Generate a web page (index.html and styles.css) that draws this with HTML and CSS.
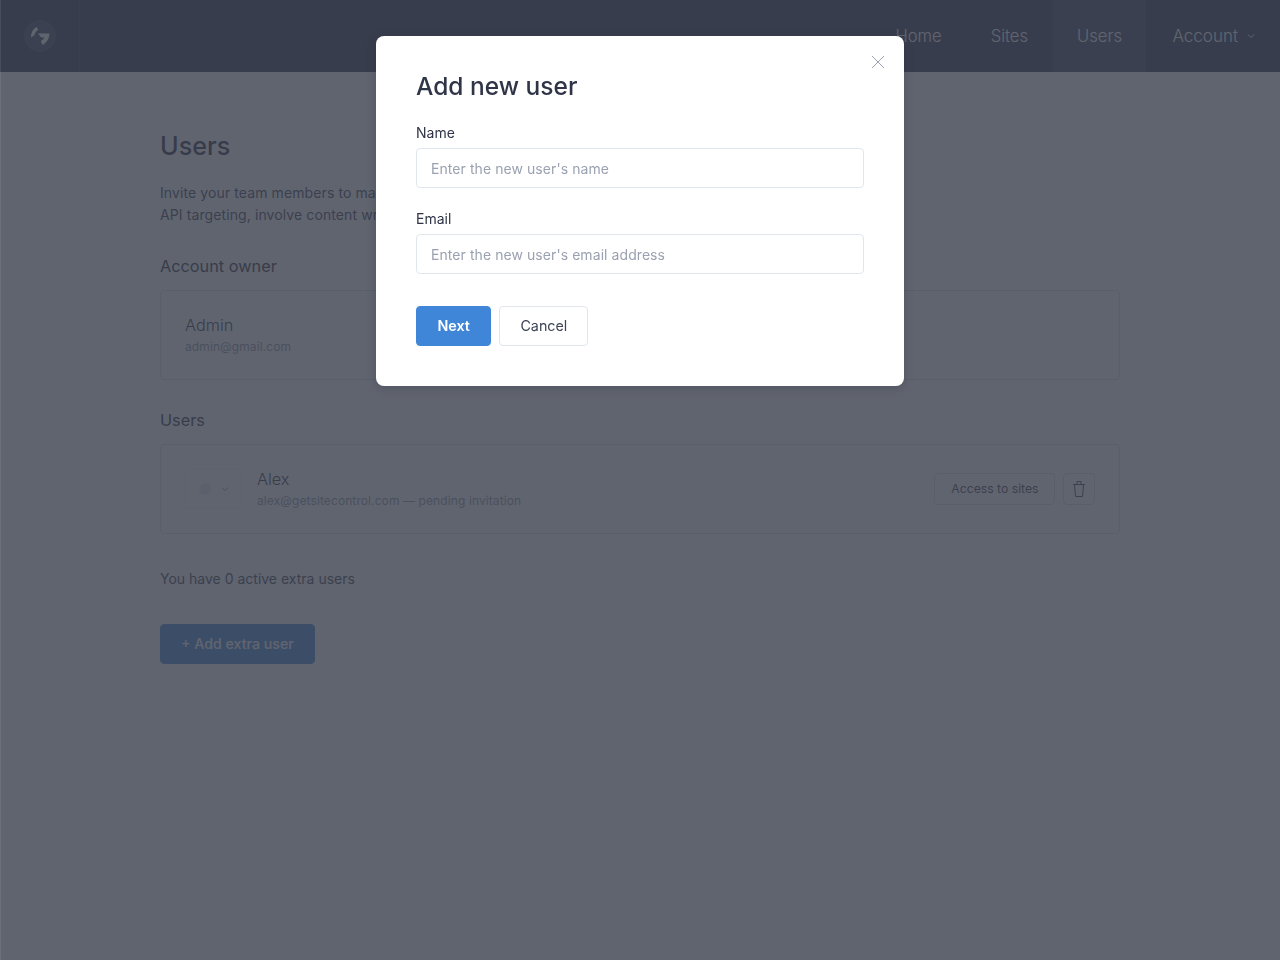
FILE: index.html
```html
<!DOCTYPE html>
<html lang="en">

<head>
    <meta charset="UTF-8">
    <meta name="viewport" content="width=device-width, initial-scale=1.0">
    <title>Users</title>
    <link rel="stylesheet" href="styles.css">
</head>

<body>
    <header class="topbar">
        <a class="logoCell" href="#">
            <svg class="logo" width="32" height="32" viewBox="0 0 32 32">
                <circle cx="16" cy="16" r="16" fill="#3d4661"></circle>
                <path d="M7 17.5 C6.8 13.4 8.6 9.4 12.4 7 L14.4 9.6 C12.4 11 11 13 10.4 15.2 Z" fill="#fff"></path>
                <path d="M14 13.6 H25.4 C25.4 18.4 23 22.6 18.6 25 L16.8 21 C18.6 20 19.8 19 20.4 17.4 H17.2 Z" fill="#fff"></path>
            </svg>
        </a>
        <nav class="topnav">
            <a href="#">Home</a>
            <a href="#">Sites</a>
            <a class="active" href="#">Users</a>
            <a class="account" href="#">Account
                <svg width="8" height="6" viewBox="0 0 8 6"><path d="M1 1.5 L4 4.5 L7 1.5" fill="none" stroke="#fff" stroke-width="1"></path></svg>
            </a>
        </nav>
    </header>

    <main class="content">
        <h1>Users</h1>
        <p class="intro">Invite your team members to manage<br>API targeting, involve content writers</p>

        <h2>Account owner</h2>
        <div class="card">
            <div class="person">
                <div class="name">Admin</div>
                <div class="mail">admin@gmail.com</div>
            </div>
        </div>

        <h2>Users</h2>
        <div class="card">
            <div class="roleSelect">
                <span class="dot"></span>
                <svg width="8" height="6" viewBox="0 0 8 6"><path d="M1 1.5 L4 4.5 L7 1.5" fill="none" stroke="#8d94a6" stroke-width="1"></path></svg>
            </div>
            <div class="person">
                <div class="name">Alex</div>
                <div class="mail">alex@getsitecontrol.com — pending invitation</div>
            </div>
            <a class="smallBtn" href="#">Access to sites</a>
            <a class="iconBtn" href="#">
                <svg width="12" height="16" viewBox="0 0 12 16" fill="none" stroke="#3d4459" stroke-width="1">
                    <path d="M0 3.5 H12"></path>
                    <path d="M4 3.5 V.5 H8 V3.5"></path>
                    <path d="M1.5 3.5 L2.5 15.5 H9.5 L10.5 3.5"></path>
                </svg>
            </a>
        </div>

        <p class="extra">You have 0 active extra users</p>
        <a class="btn primary addBtn" href="#">+ Add extra user</a>
    </main>

    <div class="overlay">
        <form class="modal">
            <button class="close" type="button">
                <svg width="14" height="14" viewBox="0 0 14 14"><path d="M1 1 L13 13 M13 1 L1 13" stroke="#9aa1b0" stroke-width="1" fill="none"></path></svg>
            </button>
            <h3>Add new user</h3>
            <label for="newName">Name</label>
            <input id="newName" type="text" placeholder="Enter the new user's name">
            <label class="secondLabel" for="newEmail">Email</label>
            <input id="newEmail" type="text" placeholder="Enter the new user's email address">
            <div class="actions">
                <a class="btn primary" href="#">Next</a>
                <a class="btn" href="#">Cancel</a>
            </div>
        </form>
    </div>
</body>

</html>
```
FILE: styles.css
```css
* {
    margin: 0;
    padding: 0;
    box-sizing: border-box;
}

body {
    background-color: #fff;
    color: #2f3547;
    font-family: "Inter", "Liberation Sans", sans-serif;
    font-size: 14px;
    min-height: 960px;
}

a {
    color: inherit;
    text-decoration: none;
}

.topbar {
    display: flex;
    justify-content: space-between;
    height: 72px;
    background-color: #2c334c;
    color: #fff;
}

.logoCell {
    display: flex;
    align-items: center;
    justify-content: center;
    width: 80px;
    border-right: 1px solid #3a425c;
}

.topnav {
    display: flex;
}

.topnav a {
    display: flex;
    align-items: center;
    gap: 9px;
    padding: 0 24.5px;
    font-size: 16.6px;
    font-weight: 300;
}

.topnav a.active {
    background-color: #3a425c;
}

.topnav a.account {
    padding: 0 25px 0 26px;
    font-size: 17px;
}

.content {
    width: 960px;
    margin: 0 auto;
    padding-top: 59px;
}

h1 {
    font-size: 25.2px;
    line-height: 30px;
    font-weight: 500;
    color: #2a2d3b;
}

.intro {
    margin-top: 21px;
    font-size: 14px;
    line-height: 22px;
    letter-spacing: .1px;
    color: #3d4152;
}

h2 {
    margin-top: 28px;
    font-size: 16.3px;
    line-height: 24px;
    font-weight: 400;
    color: #2a2d3b;
}

.card {
    display: flex;
    align-items: center;
    height: 90px;
    margin-top: 12px;
    padding: 0 24px;
    border: 1px solid #d8dce6;
    border-radius: 4px;
}

.person {
    flex: 1;
    margin-top: -2px;
}

.name {
    font-size: 16.3px;
    line-height: 22px;
    font-weight: 300;
    color: #2a2d3b;
}

.mail {
    margin-top: 3px;
    font-size: 12px;
    line-height: 16px;
    letter-spacing: .1px;
    color: #8d94a6;
}

.roleSelect {
    display: flex;
    align-items: center;
    justify-content: space-between;
    width: 56px;
    height: 40px;
    margin-right: 16px;
    padding: 0 11px 0 13px;
    border: 1px solid #f0f1f5;
    border-radius: 3px;
}

.dot {
    width: 12px;
    height: 12px;
    border-radius: 50%;
    background-color: #e9ebf0;
}

.smallBtn {
    display: flex;
    align-items: center;
    height: 32px;
    padding: 0 15.5px 2px 16px;
    border: 1px solid #d8dce6;
    border-radius: 4px;
    font-size: 12.2px;
    color: #3d4152;
}

.iconBtn {
    display: flex;
    align-items: center;
    justify-content: center;
    width: 32px;
    height: 32px;
    margin-left: 8px;
    border: 1px solid #d8dce6;
    border-radius: 4px;
}

.extra {
    margin-top: 34px;
    font-size: 14px;
    line-height: 22px;
    color: #3d4152;
}

.btn {
    display: inline-flex;
    align-items: center;
    height: 40px;
    padding: 0 20px 2px;
    border: 1px solid #e1e5ee;
    border-radius: 4px;
    font-size: 14.3px;
    color: #3d4459;
}

.btn.primary {
    padding: 0 20.5px 2px;
    border-color: #3f86d8;
    background-color: #3f86d8;
    color: #fff;
    font-weight: 600;
}

.btn.addBtn {
    margin-top: 34px;
    padding: 0 20px 2px;
    font-size: 14.2px;
    font-weight: 500;
}

.overlay {
    position: fixed;
    top: 0;
    left: 0;
    right: 0;
    bottom: 0;
    display: flex;
    justify-content: center;
    align-items: flex-start;
    padding-top: 36px;
    background-color: rgba(59, 64, 78, .81);
    box-shadow: inset 1px 0 0 rgba(255, 255, 255, .08);
}

.modal {
    position: relative;
    width: 528px;
    height: 350px;
    padding: 33px 40px 40px;
    background-color: #fff;
    border-radius: 8px;
    box-shadow: 0 2px 10px rgba(30, 35, 50, .25);
}

.close {
    position: absolute;
    top: 19px;
    right: 19px;
    width: 14px;
    height: 14px;
    border: 0;
    background: none;
}

.modal h3 {
    font-size: 24.5px;
    line-height: 34px;
    font-weight: 500;
    color: #2f3547;
}

.modal label {
    display: block;
    margin-top: 20px;
    font-size: 14px;
    line-height: 20px;
    color: #2f3547;
}

.modal label.secondLabel {
    margin-top: 21px;
}

.modal input {
    display: block;
    width: 100%;
    height: 40px;
    margin-top: 5px;
    padding: 0 14px;
    border: 1px solid #e1e5ee;
    border-radius: 4px;
    font-family: inherit;
    font-size: 14px;
    letter-spacing: .07px;
}

.modal input::placeholder {
    color: #9aa1b0;
    opacity: 1;
}

.actions {
    display: flex;
    gap: 8px;
    margin-top: 32px;
}
```
